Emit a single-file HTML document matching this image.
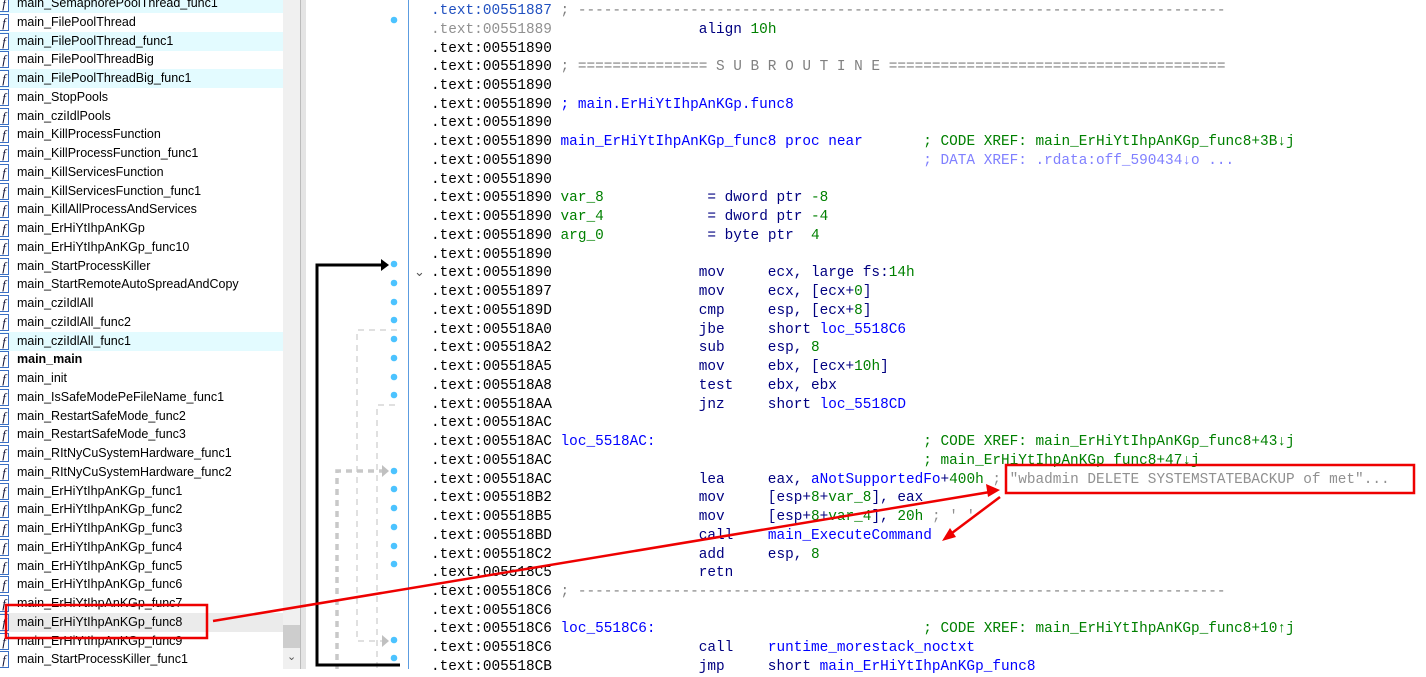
<!DOCTYPE html><html><head><meta charset="utf-8"><style>
body{margin:0;width:1426px;height:669px;overflow:hidden;background:#fff;position:relative;font-family:"Liberation Sans",sans-serif}
#left{position:absolute;left:0;top:0;width:300px;height:669px;background:#fff}
.r{position:absolute;left:0;width:283px;height:19px;font-size:12.5px;line-height:19px;color:#000;white-space:nowrap}
.r .t{position:absolute;left:17px;top:0}
.r i{position:absolute;left:0;top:1px;width:8px;height:15px;border:1px solid #3a6fc4;border-left:none;background:#fff;font-style:italic;font-family:"Liberation Serif",serif;font-size:13px;line-height:15px;text-align:center;color:#113}
.h{background:#e3fbff}.s{background:#ebebeb}
#sb{position:absolute;left:283px;top:0;width:17px;height:669px;background:#f0f0f0}
#th{position:absolute;left:283px;top:625px;width:17px;height:23px;background:#cdcdcd}
#gap{position:absolute;left:300px;top:0;width:5px;height:669px;background:#e4e4e4;border-left:1px solid #bbb}
#vl{position:absolute;left:408px;top:0;width:1px;height:669px;background:#5c9ce0}
.l{position:absolute;left:431px;font-family:"Liberation Mono",monospace;font-size:14.4px;line-height:19px;height:19px;white-space:pre;color:#000;margin-top:2px}
.n{color:#000080}.g{color:#008000}.b{color:#0000ff}.gr{color:#808080}.p{color:#8080ff}.c{color:#909090}
</style></head><body>
<div id="left">
<div class="r h" style="top:-6px"><i>f</i><span class="t">main_SemaphorePoolThread_func1</span></div>
<div class="r" style="top:12.8px"><i>f</i><span class="t">main_FilePoolThread</span></div>
<div class="r h" style="top:31.5px"><i>f</i><span class="t">main_FilePoolThread_func1</span></div>
<div class="r" style="top:50.3px"><i>f</i><span class="t">main_FilePoolThreadBig</span></div>
<div class="r h" style="top:69px"><i>f</i><span class="t">main_FilePoolThreadBig_func1</span></div>
<div class="r" style="top:87.8px"><i>f</i><span class="t">main_StopPools</span></div>
<div class="r" style="top:106.5px"><i>f</i><span class="t">main_cziIdlPools</span></div>
<div class="r" style="top:125.3px"><i>f</i><span class="t">main_KillProcessFunction</span></div>
<div class="r" style="top:144px"><i>f</i><span class="t">main_KillProcessFunction_func1</span></div>
<div class="r" style="top:162.8px"><i>f</i><span class="t">main_KillServicesFunction</span></div>
<div class="r" style="top:181.5px"><i>f</i><span class="t">main_KillServicesFunction_func1</span></div>
<div class="r" style="top:200.3px"><i>f</i><span class="t">main_KillAllProcessAndServices</span></div>
<div class="r" style="top:219px"><i>f</i><span class="t">main_ErHiYtIhpAnKGp</span></div>
<div class="r" style="top:237.8px"><i>f</i><span class="t">main_ErHiYtIhpAnKGp_func10</span></div>
<div class="r" style="top:256.5px"><i>f</i><span class="t">main_StartProcessKiller</span></div>
<div class="r" style="top:275.3px"><i>f</i><span class="t">main_StartRemoteAutoSpreadAndCopy</span></div>
<div class="r" style="top:294px"><i>f</i><span class="t">main_cziIdlAll</span></div>
<div class="r" style="top:312.8px"><i>f</i><span class="t">main_cziIdlAll_func2</span></div>
<div class="r h" style="top:331.5px"><i>f</i><span class="t">main_cziIdlAll_func1</span></div>
<div class="r" style="top:350.3px"><i>f</i><span class="t" style="font-weight:bold">main_main</span></div>
<div class="r" style="top:369px"><i>f</i><span class="t">main_init</span></div>
<div class="r" style="top:387.8px"><i>f</i><span class="t">main_IsSafeModePeFileName_func1</span></div>
<div class="r" style="top:406.5px"><i>f</i><span class="t">main_RestartSafeMode_func2</span></div>
<div class="r" style="top:425.3px"><i>f</i><span class="t">main_RestartSafeMode_func3</span></div>
<div class="r" style="top:444px"><i>f</i><span class="t">main_RItNyCuSystemHardware_func1</span></div>
<div class="r" style="top:462.8px"><i>f</i><span class="t">main_RItNyCuSystemHardware_func2</span></div>
<div class="r" style="top:481.5px"><i>f</i><span class="t">main_ErHiYtIhpAnKGp_func1</span></div>
<div class="r" style="top:500.3px"><i>f</i><span class="t">main_ErHiYtIhpAnKGp_func2</span></div>
<div class="r" style="top:519px"><i>f</i><span class="t">main_ErHiYtIhpAnKGp_func3</span></div>
<div class="r" style="top:537.8px"><i>f</i><span class="t">main_ErHiYtIhpAnKGp_func4</span></div>
<div class="r" style="top:556.5px"><i>f</i><span class="t">main_ErHiYtIhpAnKGp_func5</span></div>
<div class="r" style="top:575.3px"><i>f</i><span class="t">main_ErHiYtIhpAnKGp_func6</span></div>
<div class="r" style="top:594px"><i>f</i><span class="t">main_ErHiYtIhpAnKGp_func7</span></div>
<div class="r s" style="top:612.8px"><i>f</i><span class="t">main_ErHiYtIhpAnKGp_func8</span></div>
<div class="r" style="top:631.5px"><i>f</i><span class="t">main_ErHiYtIhpAnKGp_func9</span></div>
<div class="r" style="top:650.3px"><i>f</i><span class="t">main_StartProcessKiller_func1</span></div>
</div>
<div id="sb"></div><div id="th"></div>
<div style="position:absolute;left:287px;top:650px;font-size:11px;color:#555">&#8964;</div>
<div id="gap"></div>
<div id="vl"></div>

<div class="l" style="top:0px"><span style="color:#2050c0">.text:00551887</span> <span class="gr">; ---------------------------------------------------------------------------</span></div>
<div class="l" style="top:18.7px"><span class="c">.text:00551889</span>                 <span class="n">align</span> <span class="g">10h</span></div>
<div class="l" style="top:37.5px">.text:00551890</div>
<div class="l" style="top:56.2px">.text:00551890 <span class="gr">; =============== S U B R O U T I N E =======================================</span></div>
<div class="l" style="top:75px">.text:00551890</div>
<div class="l" style="top:93.7px">.text:00551890 <span class="b">; main.ErHiYtIhpAnKGp.func8</span></div>
<div class="l" style="top:112.4px">.text:00551890</div>
<div class="l" style="top:131.2px">.text:00551890 <span class="b">main_ErHiYtIhpAnKGp_func8 proc near</span>       <span class="g">; CODE XREF: main_ErHiYtIhpAnKGp_func8+3B↓j</span></div>
<div class="l" style="top:149.9px">.text:00551890                                           <span class="p">; DATA XREF: .rdata:off_590434↓o ...</span></div>
<div class="l" style="top:168.7px">.text:00551890</div>
<div class="l" style="top:187.4px">.text:00551890 <span class="g">var_8</span>            <span class="n">= dword ptr</span> <span class="g">-8</span></div>
<div class="l" style="top:206.1px">.text:00551890 <span class="g">var_4</span>            <span class="n">= dword ptr</span> <span class="g">-4</span></div>
<div class="l" style="top:224.9px">.text:00551890 <span class="g">arg_0</span>            <span class="n">= byte ptr</span>  <span class="g">4</span></div>
<div class="l" style="top:243.6px">.text:00551890</div>
<div class="l" style="top:262.4px">.text:00551890                 <span class="n">mov     ecx, large fs:</span><span class="g">14h</span></div>
<div class="l" style="top:281.1px">.text:00551897                 <span class="n">mov     ecx, [ecx+</span><span class="g">0</span><span class="n">]</span></div>
<div class="l" style="top:299.8px">.text:0055189D                 <span class="n">cmp     esp, [ecx+</span><span class="g">8</span><span class="n">]</span></div>
<div class="l" style="top:318.6px">.text:005518A0                 <span class="n">jbe     short </span><span class="b">loc_5518C6</span></div>
<div class="l" style="top:337.3px">.text:005518A2                 <span class="n">sub     esp, </span><span class="g">8</span></div>
<div class="l" style="top:356.1px">.text:005518A5                 <span class="n">mov     ebx, [ecx+</span><span class="g">10h</span><span class="n">]</span></div>
<div class="l" style="top:374.8px">.text:005518A8                 <span class="n">test    ebx, ebx</span></div>
<div class="l" style="top:393.5px">.text:005518AA                 <span class="n">jnz     short </span><span class="b">loc_5518CD</span></div>
<div class="l" style="top:412.3px">.text:005518AC</div>
<div class="l" style="top:431px">.text:005518AC <span class="b">loc_5518AC:</span>                               <span class="g">; CODE XREF: main_ErHiYtIhpAnKGp_func8+43↓j</span></div>
<div class="l" style="top:449.8px">.text:005518AC                                           <span class="g">; main_ErHiYtIhpAnKGp_func8+47↓j</span></div>
<div class="l" style="top:468.5px">.text:005518AC                 <span class="n">lea     eax, </span><span class="b">aNotSupportedFo</span><span class="n">+</span><span class="g">400h</span> <span class="c">; "wbadmin DELETE SYSTEMSTATEBACKUP of met"...</span></div>
<div class="l" style="top:487.2px">.text:005518B2                 <span class="n">mov     [esp+</span><span class="g">8</span><span class="n">+</span><span class="g">var_8</span><span class="n">], eax</span></div>
<div class="l" style="top:506px">.text:005518B5                 <span class="n">mov     [esp+</span><span class="g">8</span><span class="n">+</span><span class="g">var_4</span><span class="n">], </span><span class="g">20h</span> <span class="c">; ' '</span></div>
<div class="l" style="top:524.7px">.text:005518BD                 <span class="n">call    </span><span class="b">main_ExecuteCommand</span></div>
<div class="l" style="top:543.5px">.text:005518C2                 <span class="n">add     esp, </span><span class="g">8</span></div>
<div class="l" style="top:562.2px">.text:005518C5                 <span class="n">retn</span></div>
<div class="l" style="top:580.9px">.text:005518C6 <span class="gr">; ---------------------------------------------------------------------------</span></div>
<div class="l" style="top:599.7px">.text:005518C6</div>
<div class="l" style="top:618.4px">.text:005518C6 <span class="b">loc_5518C6:</span>                               <span class="g">; CODE XREF: main_ErHiYtIhpAnKGp_func8+10↑j</span></div>
<div class="l" style="top:637.2px">.text:005518C6                 <span class="n">call    </span><span class="b">runtime_morestack_noctxt</span></div>
<div class="l" style="top:655.9px">.text:005518CB                 <span class="n">jmp     short </span><span class="b">main_ErHiYtIhpAnKGp_func8</span></div>

<svg style="position:absolute;left:0;top:0" width="1426" height="669">
<g fill="#4cc3ff">
<circle cx="394" cy="20" r="3.3"/>
<circle cx="394" cy="264" r="3.3"/><circle cx="394" cy="283" r="3.3"/><circle cx="394" cy="302" r="3.3"/><circle cx="394" cy="320" r="3.3"/><circle cx="394" cy="339" r="3.3"/><circle cx="394" cy="358" r="3.3"/><circle cx="394" cy="377" r="3.3"/><circle cx="394" cy="395" r="3.3"/>
<circle cx="394" cy="471" r="3.3"/><circle cx="394" cy="489" r="3.3"/><circle cx="394" cy="508" r="3.3"/><circle cx="394" cy="527" r="3.3"/><circle cx="394" cy="546" r="3.3"/><circle cx="394" cy="564" r="3.3"/>
<circle cx="394" cy="640" r="3.3"/><circle cx="394" cy="658" r="3.3"/>
</g>
<text x="414" y="276" font-size="13" fill="#555" font-family="Liberation Sans">&#8964;</text>
<g stroke="#c0c0c0" fill="none" stroke-width="1" stroke-dasharray="6,5">
<path d="M397 330 H357 V641 H382"/>
<path d="M395 405 H377 V669"/>
</g>
<path d="M382 635 L389 641 L382 647Z" fill="#c0c0c0"/>
<path d="M385 471 H337 V669" stroke="#c8c8c8" stroke-width="3.5" fill="none" stroke-dasharray="6,5"/>
<path d="M382 465 L389 471 L382 477Z" fill="#c0c0c0"/>
<path d="M385 265 H317 V665 H400" stroke="#000" stroke-width="3" fill="none"/>
<path d="M381 259 L389 265 L381 271Z" fill="#000"/>
<g stroke="#ee0000" stroke-width="2.5" fill="none">
<rect x="6" y="605" width="201" height="33"/>
<rect x="1006" y="465" width="408" height="28"/>
<path d="M213 621 L990 492"/>
<path d="M1000 497 L948 536"/>
</g>
<path d="M1000 490 L986 484 L988 497Z" fill="#ee0000"/>
<path d="M942 541 L950 528 L956 537Z" fill="#ee0000"/>
</svg>
</body></html>
